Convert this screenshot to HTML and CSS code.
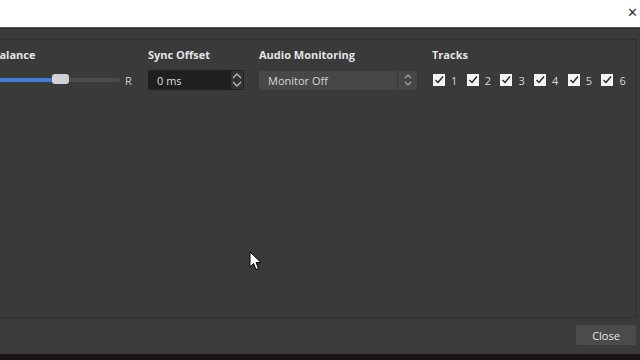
FILE: index.html
```html
<!DOCTYPE html>
<html>
<head>
<meta charset="utf-8">
<link rel="stylesheet" href="styles.css">
</head>
<body>
<div class="titlebar"><span class="close-x">✕</span></div>
<div class="dialog">
  <div class="panel">
    <div class="col col-balance">
      <div class="label">Balance</div>
      <div class="ctrl">
        <div class="slider"><div class="fill"></div><div class="handle"></div></div>
        <span class="r">R</span>
      </div>
    </div>
    <div class="col col-sync">
      <div class="label">Sync Offset</div>
      <div class="ctrl">
        <div class="spin"><span>0 ms</span>
          <svg class="arrows" width="12" height="18" viewBox="0 0 12 18"><path d="M2 7 L6 3 L10 7 M2 11 L6 15 L10 11" fill="none" stroke="#b8b8b8" stroke-width="1.3"/></svg>
        </div>
      </div>
    </div>
    <div class="col col-mon">
      <div class="label">Audio Monitoring</div>
      <div class="ctrl">
        <div class="combo"><span>Monitor Off</span>
          <div class="combo-btn"><svg width="10" height="16" viewBox="0 0 10 16"><path d="M2 6 L5 3 L8 6 M2 10 L5 13 L8 10" fill="none" stroke="#a8a8a8" stroke-width="1.1"/></svg></div>
        </div>
      </div>
    </div>
    <div class="col col-tracks">
      <div class="label">Tracks</div>
      <div class="ctrl tracks">
        <label class="chk"><span class="box"><svg width="12" height="12" viewBox="0 0 12 12"><path d="M2.5 6 L5 8.5 L10 2.5" fill="none" stroke="#222" stroke-width="1.4"/></svg></span>1</label>
        <label class="chk"><span class="box"><svg width="12" height="12" viewBox="0 0 12 12"><path d="M2.5 6 L5 8.5 L10 2.5" fill="none" stroke="#222" stroke-width="1.4"/></svg></span>2</label>
        <label class="chk"><span class="box"><svg width="12" height="12" viewBox="0 0 12 12"><path d="M2.5 6 L5 8.5 L10 2.5" fill="none" stroke="#222" stroke-width="1.4"/></svg></span>3</label>
        <label class="chk"><span class="box"><svg width="12" height="12" viewBox="0 0 12 12"><path d="M2.5 6 L5 8.5 L10 2.5" fill="none" stroke="#222" stroke-width="1.4"/></svg></span>4</label>
        <label class="chk"><span class="box"><svg width="12" height="12" viewBox="0 0 12 12"><path d="M2.5 6 L5 8.5 L10 2.5" fill="none" stroke="#222" stroke-width="1.4"/></svg></span>5</label>
        <label class="chk"><span class="box"><svg width="12" height="12" viewBox="0 0 12 12"><path d="M2.5 6 L5 8.5 L10 2.5" fill="none" stroke="#222" stroke-width="1.4"/></svg></span>6</label>
      </div>
    </div>
  </div>
  <div class="footer"><button class="btn">Close</button></div>
</div>
<div class="bottom"></div>
<svg class="cursor" width="14" height="20" viewBox="0 0 14 20"><path d="M1 1 L1 16 L4.5 12.5 L7 18.5 L9.5 17.5 L7 11.5 L12 11.5 Z" fill="#fff" stroke="#000" stroke-width="1"/></svg>
</body>
</html>
```
FILE: styles.css
```css
html, body { margin: 0; padding: 0; }
body {
  width: 640px; height: 360px; overflow: hidden; position: relative;
  background: #1a1616;
  font-family: "Open Sans", "Noto Sans", sans-serif;
  font-size: 11px; color: #dedede;
}
.titlebar {
  height: 28px; background: #fff;
  display: flex; justify-content: flex-end; align-items: flex-start;
  border-bottom: 1px solid #5a5a5a;
  box-sizing: border-box;
}
.close-x { color: #333; font-size: 13px; line-height: 13px; margin: 6px 2px 0 0; font-family: "DejaVu Sans", sans-serif; }
.dialog {
  height: 326px; background: #3b3b3b; box-sizing: border-box;
  padding-top: 10px; display: flex; flex-direction: column;
  border-top: 1px solid #2c2c2c;
}
.panel {
  height: 279px; box-sizing: border-box;
  border: 1px solid #2f2f2f; border-left: none; margin-right: 3px;
  background: #3a3a3a;
  display: flex; align-items: flex-start;
  padding-top: 7px;
}
.col { display: flex; flex-direction: column; gap: 7px; }
.label { font-weight: 700; font-size: 11px; height: 16px; line-height: 16px; color: #e4e4e4; }
.ctrl { height: 20px; display: flex; align-items: center; }
.col-balance { margin-left: -8px; width: 156px; }
.slider { position: relative; width: 128px; height: 4px; background: #4d4d4d; border-radius: 2px; }
.fill { width: 62px; height: 4px; background: #3e7fd6; border-radius: 2px; }
.handle { position: absolute; left: 60px; top: -4px; width: 17px; height: 10px; background: #d2d2d2; border-radius: 3px; }
.r { margin-left: 5px; color: #d0d0d0; }
.col-sync { width: 111px; }
.spin {
  width: 96px; height: 20px; background: #1f1f1f; border-radius: 2px;
  display: flex; align-items: center; justify-content: space-between;
  box-sizing: border-box; padding-left: 9px; padding-right: 1px;
}
.spin .arrows { background: #333; }
.col-mon { width: 173px; }
.combo {
  width: 158px; height: 19px; background: #474747; border-radius: 2px;
  display: flex; align-items: center; justify-content: space-between;
  box-sizing: border-box; padding-left: 9px; color: #d6d6d6;
}
.combo-btn { width: 19px; height: 19px; border-left: 1px solid #3c3c3c; display: flex; align-items: center; justify-content: center; }
.tracks { padding-left: 1px; }
.chk { display: flex; align-items: center; gap: 6px; color: #d8d8d8; width: 33.7px; }
.box { width: 12px; height: 12px; background: #f4f4f4; display: flex; }
.footer { flex: 1; display: flex; justify-content: flex-end; align-items: flex-start; padding: 7px 4px 0 0; }
.btn {
  width: 60px; height: 20px; background: #4b4b4b; border: none; border-radius: 2px;
  color: #e6e6e6; font-family: "Open Sans", "Noto Sans", sans-serif; font-size: 11px; padding: 0;
}
.bottom { height: 6px; background: #1c1414; }
.cursor { position: absolute; left: 249px; top: 251px; }
```
